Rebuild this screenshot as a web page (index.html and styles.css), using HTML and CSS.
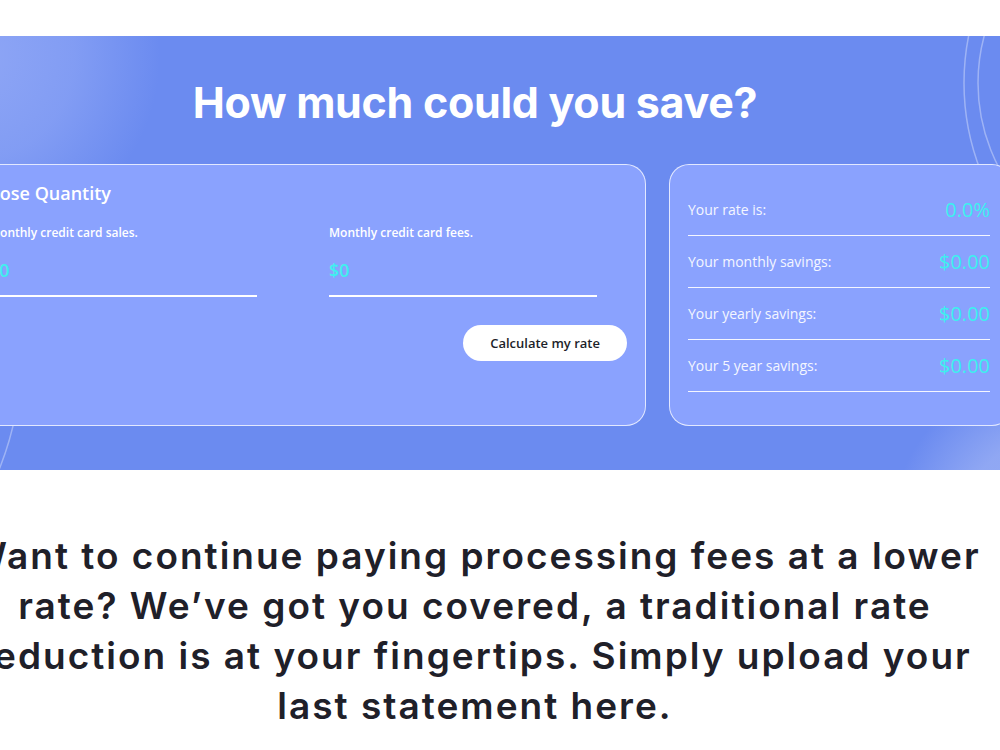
FILE: index.html
```html
<!DOCTYPE html>
<html lang="en">
<head>
    <meta charset="UTF-8">
    <meta name="viewport" content="width=device-width, initial-scale=1.0">
    <title>How much could you save?</title>
    <link rel="stylesheet" href="styles.css">
</head>
<body>
<div class="page">

  <!-- savings calculator -->
  <section class="saver">
    <svg class="rings" viewBox="0 0 1050 434" width="1050" height="434" aria-hidden="true">
      <circle cx="1255" cy="47" r="241" />
      <circle cx="1210" cy="47" r="182" />
      <circle cx="-229" cy="321" r="300" />
    </svg>

    <h2 class="saver-title">How much could you save?</h2>

    <div class="saver-grid">
      <div class="card card-form">
        <h3 class="card-title">Choose Quantity</h3>
        <div class="fields">
          <div class="field">
            <label for="sales">Monthly credit card sales.</label>
            <input type="text" id="sales" value="$0">
          </div>
          <div class="field">
            <label for="fees">Monthly credit card fees.</label>
            <input type="text" id="fees" value="$0">
          </div>
        </div>
        <div class="actions">
          <button class="btn-calc">Calculate my rate</button>
        </div>
      </div>

      <div class="card card-result">
        <div class="result-row">
          <span>Your rate is:</span>
          <span class="result-value">0.0%</span>
        </div>
        <div class="result-row">
          <span>Your monthly savings:</span>
          <span class="result-value">$0.00</span>
        </div>
        <div class="result-row">
          <span>Your yearly savings:</span>
          <span class="result-value">$0.00</span>
        </div>
        <div class="result-row">
          <span>Your 5 year savings:</span>
          <span class="result-value">$0.00</span>
        </div>
      </div>
    </div>
  </section>

  <!-- pitch text -->
  <p class="pitch">Want to continue paying processing fees at a lower<br>
    rate? We&rsquo;ve got you covered, a traditional rate<br>
    reduction is at your fingertips. Simply upload your<br>
    last statement here.</p>

</div>
</body>
</html>
```

FILE: styles.css
```css
body {
  margin: 0;
  background: #fff;
  overflow: hidden;
  font-family: "Open Sans", "Noto Sans", sans-serif;
}

/* page is a bit wider than the window */
.page {
  width: 1050px;
  margin-left: -50px;
}

.saver {
  position: relative;
  overflow: hidden;
  margin-top: 36px;
  height: 434px;
  box-sizing: border-box;
  padding-top: 38px;
  background:
    radial-gradient(circle 190px at 20px 20px, rgba(145, 168, 246, 0.95) 0, rgba(145, 168, 246, 0.6) 55%, rgba(145, 168, 246, 0) 100%),
    radial-gradient(circle 170px at 1110px 500px, rgba(150, 172, 244, 1) 0, rgba(150, 172, 244, 0.85) 60%, rgba(150, 172, 244, 0) 100%),
    #6b8bf0;
}

.rings {
  position: absolute;
  left: 0;
  top: 0;
}

.rings circle {
  fill: none;
  stroke: rgba(255, 255, 255, 0.35);
  stroke-width: 1.5;
}

.saver-title {
  position: relative;
  margin: 0 0 34px;
  text-align: center;
  color: #fff;
  font-family: Inter, Roboto, sans-serif;
  font-weight: 700;
  font-size: 43px;
  line-height: 56px;
  letter-spacing: -0.3px;
}

.saver-grid {
  position: relative;
  display: flex;
  gap: 23px;
  width: 1074px;
  margin-left: -12px;
}

.card {
  box-sizing: border-box;
  height: 262px;
  background: #8aa2fe;
  border: 1px solid rgba(255, 255, 255, 0.75);
  border-radius: 20px;
  color: #fff;
}

.card-form {
  width: 708px;
  padding: 16px 18px 0 27px;
}

.card-title {
  margin: 0;
  font-size: 18px;
  font-weight: 600;
  line-height: 24px;
}

.fields {
  display: flex;
  gap: 72px;
  margin: 19px 0 0 23px;
}

.field {
  display: flex;
  flex-direction: column;
  width: 268px;
}

.field label {
  font-size: 12px;
  font-weight: 600;
  line-height: 18px;
}

.field input {
  margin-top: 12px;
  padding: 4px 0 13px;
  background: transparent;
  border: none;
  border-bottom: 2px solid #fff;
  color: #3ff0ee;
  font-family: inherit;
  font-size: 18px;
  font-weight: 600;
  outline: none;
}

.actions {
  display: flex;
  justify-content: flex-end;
  margin-top: 28px;
}

.btn-calc {
  height: 36px;
  padding: 0 27px;
  background: #fff;
  border: none;
  border-radius: 18px;
  color: #1d1f2a;
  font-family: inherit;
  font-size: 13px;
  font-weight: 600;
  cursor: pointer;
}

.card-result {
  width: 343px;
  padding: 19px 19px 0 18px;
}

.result-row {
  display: flex;
  align-items: center;
  justify-content: space-between;
  height: 51px;
  margin-right: 2px;
  border-bottom: 1px solid rgba(255, 255, 255, 0.9);
  font-size: 14px;
  color: #f4f6ff;
}

.result-value {
  color: #3cf0ee;
  font-size: 20px;
  font-weight: 500;
}

.pitch {
  margin: 61px 0 0;
  text-align: center;
  color: #1f2029;
  font-family: Inter, Roboto, sans-serif;
  font-weight: 600;
  font-size: 37px;
  line-height: 50px;
  letter-spacing: 2px;
}
```
